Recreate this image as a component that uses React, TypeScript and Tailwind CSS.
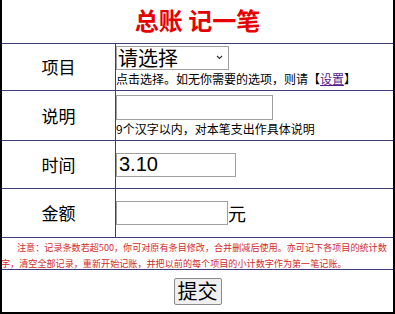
import { useState } from "react";

const cjk = { fontFamily: '"Noto Sans CJK SC", "Noto Sans", sans-serif' };

function Label({ text }: { text: string }) {
  return (
    <div className="flex w-[114px] shrink-0 items-center justify-center border-r border-[#3d3b78] text-[17px] text-black">
      {text}
    </div>
  );
}

export default function App() {
  const [item, setItem] = useState("");
  const [note, setNote] = useState("");
  const [date, setDate] = useState("3.10");
  const [amount, setAmount] = useState("");

  return (
    <div className="w-[395px] bg-white" style={cjk}>
      <div className="flex h-[314px] flex-col border-x-2 border-b-2 border-black">
        {/* title */}
        <div className="flex h-[44px] shrink-0 items-center justify-center border-b border-[#3d3b78] pb-[3px]">
          <h1 className="text-[24px] font-bold leading-none text-[#e60000]">总账 记一笔</h1>
        </div>

        {/* 项目 */}
        <div className="flex h-[47px] shrink-0 border-b border-[#3d3b78]">
          <Label text="项目" />
          <div className="flex flex-col pt-[2px]">
            <div className="relative h-[24px] w-[113px]">
              <select
                value={item}
                onChange={(e) => setItem(e.target.value)}
                className="h-full w-full appearance-none border border-[#a0a0a0] bg-white pl-[1px] text-[20px] leading-none text-black outline-none"
                style={cjk}
              >
                <option value="">请选择</option>
                <option value="a">日常开支</option>
              </select>
              <svg className="pointer-events-none absolute right-[6px] top-[9px]" width="7" height="5" viewBox="0 0 7 5">
                <path d="M1 1l2.5 2.5L6 1" stroke="#333" strokeWidth="1.1" fill="none" />
              </svg>
            </div>
            <p className="mt-[2px] text-[12px] leading-[14px] text-black">
              点击选择。如无你需要的选项，则请【<a href="#" className="text-[#551a8b] underline">设置</a>】
            </p>
          </div>
        </div>

        {/* 说明 */}
        <div className="flex h-[50px] shrink-0 border-b border-[#3d3b78]">
          <Label text="说明" />
          <div className="flex flex-col pt-[4px]">
            <input
              value={note}
              onChange={(e) => setNote(e.target.value)}
              className="h-[25px] w-[157px] border border-[#a0a0a0] bg-white px-1 text-[18px] outline-none"
            />
            <p className="mt-[2px] text-[12px] leading-[14px] text-black">9个汉字以内，对本笔支出作具体说明</p>
          </div>
        </div>

        {/* 时间 */}
        <div className="flex h-[48px] shrink-0 border-b border-[#3d3b78]">
          <Label text="时间" />
          <div className="flex items-center">
            <input
              value={date}
              onChange={(e) => setDate(e.target.value)}
              className="h-[24px] w-[120px] border border-[#a0a0a0] bg-white pl-[2px] text-[20px] leading-none text-black outline-none"
              style={{ fontFamily: '"Liberation Sans", Arial, sans-serif' }}
            />
          </div>
        </div>

        {/* 金额 */}
        <div className="flex h-[49px] shrink-0 border-b border-[#3d3b78]">
          <Label text="金额" />
          <div className="flex items-center">
            <input
              value={amount}
              onChange={(e) => setAmount(e.target.value)}
              className="h-[24px] w-[112px] border border-[#a0a0a0] bg-white px-1 text-[18px] outline-none"
            />
            <span className="text-[18px] leading-none text-black">元</span>
          </div>
        </div>

        {/* notice */}
        <div className="h-[32px] shrink-0 border-b border-[#3d3b78] pt-[1px]">
          <p className="-ml-px indent-[16px] text-[9.1px] leading-[16px] text-[#d42a2a]">
            注意：记录条数若超500，你可对原有条目修改，合并删减后使用。亦可记下各项目的统计数字，清空全部记录，重新开始记账，并把以前的每个项目的小计数字作为第一笔记账。
          </p>
        </div>

        {/* submit */}
        <div className="flex flex-1 items-center justify-center">
          <button
            type="button"
            className="h-[27px] w-[48px] rounded-[2px] border border-[#8a8a8a] bg-[#efefef] text-[20px] leading-none text-black"
            style={cjk}
          >
            提交
          </button>
        </div>
      </div>
    </div>
  );
}
